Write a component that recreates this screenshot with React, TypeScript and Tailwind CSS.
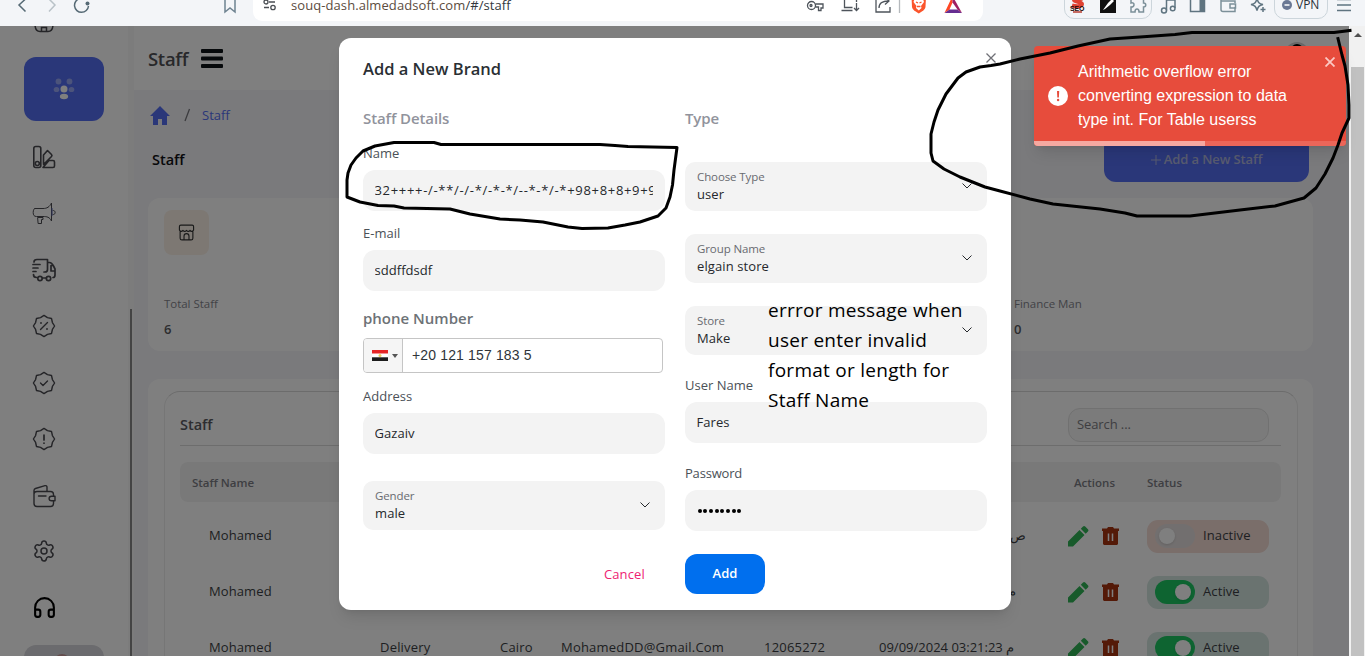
import type { ReactNode } from "react";
import { Settings, Headphones } from "lucide-react";

const star = Array.from({ length: 16 }, (_, i) => {
  const r = i % 2 === 0 ? 10.6 : 9.1;
  const a = (i * Math.PI) / 8;
  return `${(12 + r * Math.sin(a)).toFixed(2)},${(12 - r * Math.cos(a)).toFixed(2)}`;
}).join(" ");

function Ico({ children, size = 24, w = 1.4, className = "" }: { children: ReactNode; size?: number; w?: number; className?: string }) {
  return (
    <svg width={size} height={size} viewBox="0 0 24 24" fill="none" stroke="currentColor" strokeWidth={w} strokeLinecap="round" strokeLinejoin="round" className={`shrink-0 ${className}`}>
      {children}
    </svg>
  );
}

function BrowserBar() {
  return (
    <div className="relative h-[26px] shrink-0 bg-[#f3f5f8] text-[#5f7079]">
      <svg width="240" height="26" className="absolute left-0 top-0" fill="none" strokeWidth="1.5">
        <path d="M25.5 -1L19 5l6.500 6.500" stroke="#566a75" />
        <path d="M49 -1l6 6-6 6.500" stroke="#b9c2c8" />
        <path d="M80 -1.500A7 7 0 1 0 88.500 6" stroke="#566a75" />
        <circle cx="87.500" cy="3.500" r="2" fill="#566a75" />
        <path d="M225 -2V12l5-4 5 4V-2" stroke="#6e8290" />
      </svg>
      <div className="absolute -top-4 left-[253px] flex h-[37px] w-[730px] items-center rounded-[9px] bg-white">
        <svg width="16" height="14" className="absolute left-[9px] top-[13px]" fill="none" stroke="#4b4f54" strokeWidth="1.300">
          <circle cx="4" cy="5" r="2" /><path d="M7 5h6M2 10.500h5" /><circle cx="11" cy="10.500" r="2.200" />
        </svg>
        <div className="pl-[38px] pt-[5px] font-['Open_Sans',sans-serif] text-[13px] leading-[14px] tracking-[0.08px] text-[#33383d]">
          <span className="text-[#5c4c40]">souq-dash.almedadsoft.com</span>/#/staff
        </div>
        <svg width="200" height="37" viewBox="800 -16 200 37" className="absolute left-[547px] top-0" fill="none" stroke="#4e545b" strokeWidth="1.300">
          <circle cx="811.500" cy="5.500" r="4" /><circle cx="811" cy="5.500" r="1" /><path d="M815.500 4h7.500v4h-2v2.500h-2.500V7h-3" />
          <path d="M844.500 -1v8.500h8M856.500 -1v3M841.500 10.500h11M856.500 3v7.500m-2.500-2.500l2.500 2.500 2.500-2.500" />
          <path d="M876 0v12h14V7M879 8c0-5 4-7 9-7m-3-4l4 4-4 3.500" />
          <path d="M899.500 -2V13" stroke="#b5b9bd" />
          <path d="M911.500 -3h14.500l-.5 10c-.5 3-3.500 4.500-6.700 6.500-3.200-2-6.300-3.500-6.800-6.500z" fill="#fb542b" stroke="none" />
          <path d="M914.500 -1l4.300 1 4.200-1 1 3-3 4 .5 2-2.700 2.500L916 8l.5-2-3-4z" fill="#fff" stroke="none" />
          <path d="M916 2l2 1M921.500 2l-2 1M917 6.500h3.500" stroke="#fb542b" />
          <path d="M952.500 -4L944.500 13l5-3.500 3-7z" fill="#ff4724" stroke="none" />
          <path d="M944.500 13h17.500l-4.500-3.500h-8z" fill="#662d91" stroke="none" />
          <path d="M952.500 -4L962 13l-4.500-3.500-5-7z" fill="#9e1f63" stroke="none" />
        </svg>
      </div>
      <div className="absolute -top-3 left-[1064px] h-[31px] w-[88px] rounded-[10px] border border-[#ccd5db]" />
      <div className="absolute -top-3 left-[1274px] h-[31px] w-[54px] rounded-[10px] border border-[#ccd5db]" />
      <svg width="305" height="26" viewBox="1060 0 305 26" className="absolute left-[1060px] top-0" fill="none" stroke="#5f7480" strokeWidth="1.500">
        <path d="M1083 -1c-3-1-9-1-9 1s8 1.500 8 4-5 3-10 1.500" stroke="#df4232" strokeWidth="4" />
        <path d="M1073 12h9" stroke="#b83c30" strokeWidth="1.500" />
        <rect x="1100" y="-3" width="16" height="16" fill="#111" stroke="none" />
        <path d="M1103 10l5-7 4-4 2 2-4 4-5 4z" fill="#fff" stroke="none" />
        <path d="M1131 -1v4c4-1 4 4 0 4v5h4c0-4 4-4 4 0h4.500V7c3 0 3-4 0-4V-1" stroke="#7c9099" />
        <circle cx="1164" cy="10.500" r="2.500" /><path d="M1166.500 10.500V0h8.500v8" /><circle cx="1172.700" cy="8.500" r="2.300" />
        <path d="M1190.500 -1v12.500h14V-1" /><rect x="1199.500" y="-1" width="5.500" height="13" fill="#5f7480" stroke="none" />
        <path d="M1221 0v9.500c0 1 1 2 2 2h12V7M1221 1h14v2M1235.500 4h-5.500v4h5.500z" stroke="#7c9099" />
        <path d="M1251 4.500c4-.5 5-2 6-6 1 4 2 5.500 6 6-4 1-5 2-6 6-1-4-2-5-6-6zM1263 7v5M1260.500 9.500h5" />
        <circle cx="1287" cy="5" r="5" fill="#6a7894" stroke="none" /><path d="M1284.500 5h5" stroke="#fff" />
        <path d="M1337 -.5h14M1337 5h14M1337 10.500h14" />
      </svg>
      <span className="absolute left-[1070px] top-[3px] font-['Liberation_Sans',sans-serif] text-[7px] font-bold leading-[12px] tracking-[-0.2px] text-[#1c0c0a]">SEO</span>
      <span className="absolute left-[1296px] top-0 font-['Open_Sans',sans-serif] text-[12px] leading-[10px] text-[#2b3238]">VPN</span>
    </div>
  );
}

function Nav({ children }: { children: ReactNode }) {
  return <div className="flex h-[56.5px] shrink-0 items-center pl-8 text-[#4a4a50]">{children}</div>;
}

function Sidebar() {
  return (
    <aside className="flex w-[128px] shrink-0 flex-col overflow-hidden bg-white">
      <div className="h-[31px] shrink-0 pl-[34px] text-[#4a4a50]">
        <svg width="20" height="8" fill="none" stroke="currentColor" strokeWidth="1.500"><path d="M1 -2c0 5 2 7.500 5 7.500h8c3 0 5-2.500 5-7.500M7.500 5V1.500h5V5" /></svg>
      </div>
      <div className="ml-6 flex h-16 w-20 shrink-0 items-center justify-center rounded-xl bg-[#556ef2]">
        <svg width="22" height="22" viewBox="0 0 22 22" fill="#fff">
          <g opacity=".4"><circle cx="5.500" cy="3.500" r="2.900" /><circle cx="16.500" cy="3.500" r="2.900" /><ellipse cx="3.500" cy="11.500" rx="2.800" ry="2.600" /><ellipse cx="18.500" cy="11.500" rx="2.800" ry="2.600" /></g>
          <circle cx="11" cy="11" r="3.500" /><ellipse cx="11" cy="18.500" rx="4.100" ry="2.800" />
        </svg>
      </div>
      <div className="h-[7.50px] shrink-0" />
      <Nav><Ico w={1.600}><rect x="1.800" y="1.500" width="7" height="21" rx="2" /><circle cx="5.300" cy="18.500" r="2" /><path d="M11.500 18.500V10l4-4.500 4 4c.7.700.7 1.200 0 2l-8 8M17 15.500h4c1 0 1.500.5 1.500 1.500v4c0 1-.5 1.500-1.500 1.500H11z" /></Ico></Nav>
      <Nav><Ico w={1} className="-mt-[3px]"><path d="M3 8.500h8c4 0 6.500-1.500 8.500-5.500v18c-2-4-4.500-4.500-8.500-4.500H4.500C2 16.500 1.200 15 1.200 12.500S2 8.500 3 8.500zM6 17.500h5v2H9.500v4H6.500z" /><path d="M21 10.500c3-.5 3 4.500 0 4" /><path d="M20 8.500v7" stroke="#5560ae" /></Ico></Nav>
      <Nav><Ico w={1.700}><path d="M2 4c0-1.500 1-2.500 3-2.500h10.500v10c0 1.500-1 2.500-2.500 2.500h-1M1 6.500h7M1 10h5M1 13.500h3M15.500 4.500h2c2 0 3 1.500 4 3.500l1.500 3v6c0 1.500-.5 2.500-2 2.500M1.500 16.500c0 1.500.5 3 3 3h.5M10.500 20h4M20.500 7.500h-1.500v5.500h4" /><circle cx="8" cy="20.500" r="2.200" /><circle cx="16.500" cy="20.500" r="2.200" /></Ico></Nav>
      <Nav><Ico><polygon points={star} /><path d="M8.500 15.500l7-7" /><path d="M9 9v.1M15 15v.1" strokeWidth="1.800" /></Ico></Nav>
      <Nav><Ico><polygon points={star} /><path d="M8.500 12l2.500 2.500 4.500-4.500" /></Ico></Nav>
      <Nav><Ico><polygon points={star} /><path d="M12 8v5M12 16v.2" strokeWidth="1.700" /></Ico></Nav>
      <Nav><Ico><path d="M2 10v9.500c0 2 1 3 3 3h13.500c2 0 3-1 3-3V17M2 10c0-1.500 1-2.500 3-2.500h13.500c2 0 3 1 3 3V12M2 10V6.500c0-1 .5-1.700 1.500-2L13 1.700c1-.3 2 .3 2 1.300v4.500M6.500 12h7.500" /><path d="M19.500 12.200H23v4.600h-3.500c-3.200 0-3.200-4.600 0-4.600z" /></Ico></Nav>
      <Nav><Settings size={24} strokeWidth={1.500} className="-mt-[2px]" /></Nav>
      <Nav><Headphones size={25} strokeWidth={2} className="-mt-[2px] text-black" /></Nav>
      <div className="ml-6 mt-[8px] flex h-16 w-20 shrink-0 justify-center rounded-xl bg-[#d7d7dc] pt-[9px] pr-1"><div className="h-10 w-4 rounded-full bg-[#c69a9a]" /></div>
    </aside>
  );
}

const cols = "grid grid-cols-[172px_120px_61px_203px_115px_189px_79px_122px]";

function StatusChip({ on }: { on: boolean }) {
  return (
    <div className={`flex h-[33px] w-[122px] items-center rounded-[11px] pl-2 ${on ? "bg-[#d5e6e1]" : "bg-[#f4dcd4]"}`}>
      <div className={`flex h-6 w-10 items-center rounded-full px-1 ${on ? "justify-end bg-[#1cc863]" : "justify-start bg-[#e4dfdf]"}`}>
        <div className="h-4 w-4 rounded-full bg-white shadow" />
      </div>
      <span className="ml-2 text-[13px] tracking-[0.1px] text-[#3c3f44]">{on ? "Active" : "Inactive"}</span>
    </div>
  );
}

function Row({ cells, date, on }: { cells: string[]; date: ReactNode; on: boolean }) {
  return (
    <div className={`${cols} h-14 shrink-0 items-center text-[13px] tracking-[0.2px] text-[#3c3f44]`}>
      <span className="pl-[1px] tracking-[0.1px]">Mohamed</span>
      {cells.map((c, i) => <span key={i} className="whitespace-nowrap">{c}</span>)}
      <span className="whitespace-nowrap">{date}</span>
      <span className="flex items-center gap-[13px]">
        <svg width="21" height="21" viewBox="0 0 21 21" fill="#2f9e4f"><path d="M0 20.500v-5L11.500 4l5 5L5 20.500zM12.800 2.800L15 .6c.7-.7 1.500-.7 2.200 0l2.700 2.700c.7.700.7 1.500 0 2.200l-2.200 2.200z" fill="#31b457" /></svg>
        <svg width="17" height="18" viewBox="0 0 17 18"><path d="M0 1.500h5L6 0h5l1 1.500h5V4h-1v13l-1 1H2l-1-1V4H0z" fill="#a83410" /><path d="M6.500 6.500v7.500M10.500 6.500v7.500" stroke="#fff" strokeWidth="1.500" /></svg>
      </span>
      <StatusChip on={on} />
    </div>
  );
}

function MainPage() {
  return (
    <main className="flex min-w-0 flex-1 flex-col overflow-hidden bg-[#f4f4f9]">
      <header className="relative flex h-16 shrink-0 items-center bg-white pl-[14px]">
        <span className="pt-[2px] text-[18.500px] font-semibold leading-7 tracking-[-0.3px] text-[#505055]">Staff</span>
        <svg width="22" height="20" className="ml-[13px] mt-[1px]" fill="#0d1216"><rect y="0" width="22" height="4" rx="1" /><rect y="7.500" width="22" height="4" rx="1" /><rect y="15" width="22" height="4" rx="1" /></svg>
        <div className="absolute right-[40px] top-4 flex h-8 w-6 justify-center rounded-full bg-[#d0d0d0] pt-[2px]"><div className="h-6 w-3 rounded-full bg-black" /></div>
      </header>
      <div className="flex h-[50px] shrink-0 items-center pl-4 text-[13px] text-[#556ef2]">
        <svg width="20" height="19" fill="#556ef2"><path d="M10 0l10 10h-3v9h-5v-6H8v6H3v-9H0z" /></svg>
        <svg width="7" height="14" className="ml-[14px]" stroke="#77777c" strokeWidth="1.300"><path d="M1 13L5.500 1" /></svg>
        <span className="ml-[11px] pt-[2px]">Staff</span>
      </div>
      <div className="flex h-[58px] shrink-0 items-start justify-between pl-[18px] pr-10">
        <span className="mt-[8px] text-[14.500px] font-semibold leading-6 tracking-[0px] text-[#101014]">Staff</span>
        <div className="-mt-1 flex h-[46px] w-[205px] items-center justify-center gap-[3px] rounded-xl bg-[#556ef2] pt-[2px] text-[13px] font-semibold tracking-[-0.1px] text-[#b0b7df]">
          <svg width="10" height="10" stroke="currentColor"><path d="M0 5h10M5 0v10" /></svg>Add a New Staff
        </div>
      </div>
      <section className="ml-[14px] flex h-[153px] w-[1165px] shrink-0 rounded-xl bg-white p-4 pt-3">
        <div className="flex w-[850px] flex-col">
          <div className="flex h-[45px] w-[45px] shrink-0 items-center justify-center rounded-lg bg-[#faf1e6] text-[#333]">
            <Ico size={17} w={1.600}><path d="M2 3.500C2 2 3 1.500 4 1.500h16c1.500 0 2 1 2 2v5c-1 2.500-4 2.500-5 .5-1.500 2-3.500 2-5 0-1.500 2-3.500 2-5 0-1.500 2-4 2-5-.5zM3 11v9c0 1.500 1 2.500 2.500 2.500h13c1.500 0 2.500-1 2.500-2.500v-9M8.500 22v-5c0-4.500 7-4.500 7 0v5" /></Ico>
          </div>
          <span className="mt-[40px] text-[11.500px] leading-[18px] tracking-[-0.03px] text-[#85868e]">Total Staff</span>
          <span className="mt-[6px] text-[13px] font-semibold leading-5 text-[#5a5b61]">6</span>
        </div>
        <div className="flex flex-col pt-[85px]">
          <span className="text-[11.500px] leading-[18px] tracking-[-0.03px] text-[#85868e]">Finance Man</span>
          <span className="mt-[6px] text-[13px] font-semibold leading-5 text-[#5a5b61]">0</span>
        </div>
      </section>
      <section className="ml-[14px] mt-7 w-[1165px] flex-1 shrink-0 rounded-t-xl bg-white px-4 pt-3">
        <div className="h-[300px] w-[1134px] rounded-2xl border border-[#ececec] border-t-[#d8d8d8] px-[15px]">
          <div className="flex h-[54px] w-[1101px] items-center justify-between border-b border-[#dadada] pr-3">
            <span className="pt-3 text-[14.500px] font-semibold tracking-[0px] text-[#5a5b61]">Staff</span>
            <div className="mt-[12px] flex h-[34px] w-[201px] items-center rounded-xl border border-[#e2e2e2] bg-[#f6f6f6] pl-2 text-[13px] tracking-[-0.1px] text-[#7c7d83]">Search ...</div>
          </div>
          <div className="mt-4 flex h-10 w-[1101px] items-center rounded-lg bg-[#f3f3f3] pl-3 pt-[2px] text-[11.500px] font-semibold text-[#7c7d84]">
            <span className="w-[882px]">Staff Name</span>
            <span className="w-[73px]">Actions</span>
            <span>Status</span>
          </div>
          <div className="mt-[6px] flex h-[148px] flex-col overflow-hidden pl-[28px]">
            <Row cells={["", "", "", ""]} date={<span className="pl-[131px]">ص</span>} on={false} />
            <Row cells={["", "", "", ""]} date={<span className="pl-[129px]">م</span>} on />
            <Row cells={["Delivery", "Cairo", "MohamedDD@Gmail.Com", "12065272"]} date="09/09/2024 03:21:23 م" on />
          </div>
        </div>
      </section>
    </main>
  );
}

function Label({ children, className = "" }: { children: ReactNode; className?: string }) {
  return <div className={`mb-[2px] flex h-[30px] shrink-0 items-center pt-[2px] text-[13px] tracking-[0.02px] text-[#4b5157] ${className}`}>{children}</div>;
}

function Field({ children }: { children: ReactNode }) {
  return (
    <div className="flex h-[41px] shrink-0 items-center rounded-xl bg-[#f3f3f3] pl-[11.500px] pr-3 text-[13px] tracking-[0.05px] text-[#25282c]">
      <div className="w-full overflow-hidden whitespace-nowrap">{children}</div>
    </div>
  );
}

function Select({ label, value, className }: { label: string; value: string; className: string }) {
  return (
    <div className={`flex h-[49px] shrink-0 items-center justify-between rounded-[10px] bg-[#f3f3f3] pb-[2px] pl-3 pr-[15px] ${className}`}>
      <div>
        <div className="text-[11.500px] leading-[18px] tracking-[-0.1px] text-[#686a70]">{label}</div>
        <div className="text-[13px] leading-[17px] tracking-[0.1px] text-[#25282c]">{value}</div>
      </div>
      <svg width="10" height="6" fill="none" stroke="#25282c"><path d="M.5 .5L5 5 9.500 .5" /></svg>
    </div>
  );
}

function Modal() {
  return (
    <div className="absolute left-[339px] top-[38px] flex h-[572px] w-[672px] flex-col rounded-xl bg-white px-6 shadow-lg">
      <svg width="10" height="10" className="absolute left-[647px] top-[15px]" stroke="#6f7076" strokeWidth="1.300"><path d="M.5 .5l9 9M9.500 .5l-9 9" /></svg>
      <div className="flex h-[60px] shrink-0 items-center pt-[2px] text-[16.500px] font-semibold text-[#2a2f34]">Add a New Brand</div>
      <div className="grid grid-cols-2 gap-5">
        <div className="flex flex-col">
          <div className="flex h-10 items-center text-[15px] font-semibold tracking-[-0.1px] text-[#91939c]">Staff Details</div>
          <Label>Name</Label>
          <Field><span className="tracking-[0.68px]">32++++-/-**/-/-*/-*-*/--*-*/-*+98+8+8+9+98</span></Field>
          <Label className="mt-[7px]">E-mail</Label>
          <Field>sddffdsdf</Field>
          <div className="mb-[6px] mt-[13px] flex h-7 items-center text-[15px] font-semibold text-[#6d7276]">phone Number</div>
          <div className="flex h-[35px] w-[300px] overflow-hidden rounded-[4px] border border-[#c5c5c5]">
            <div className="flex w-[39px] items-center gap-1 border-r border-[#c5c5c5] bg-[#f5f5f5] pl-2">
              <svg width="16" height="11"><rect width="16" height="4" fill="#e62626" /><rect y="3.500" width="16" height="4" fill="#fff" /><rect y="7.300" width="16" height="3.700" fill="#1c1c1c" /><circle cx="8" cy="5.600" r="1.500" fill="#e8cf5e" /></svg>
              <svg width="6" height="4" fill="#555"><path d="M0 0h6L3 4z" /></svg>
            </div>
            <div className="flex items-center pl-[9px] font-['Liberation_Sans',sans-serif] text-[14px] tracking-[0.15px] text-[#30343a]">+20 121 157 183 5</div>
          </div>
          <Label className="mt-2">Address</Label>
          <Field>Gazaiv</Field>
          <Select className="mt-[27px]" label="Gender" value="male" />
        </div>
        <div className="flex flex-col">
          <div className="flex h-10 items-center text-[15px] font-semibold tracking-[-0.1px] text-[#91939c]">Type</div>
          <Select className="mt-6" label="Choose Type" value="user" />
          <Select className="mt-[23px]" label="Group Name" value="elgain store" />
          <Select className="mt-[23px]" label="Store" value="Make" />
          <Label className="mt-[15px]">User Name</Label>
          <Field>Fares</Field>
          <Label className="mt-[15px]"><span className="tracking-[-0.2px]">Password</span></Label>
          <Field>
            <span className="flex gap-[1.700px] pl-[1px]">{Array.from({ length: 8 }, (_, i) => <span key={i} className="h-1 w-1 rounded-full bg-black" />)}</span>
          </Field>
        </div>
      </div>
      <div className="mt-[23px] flex items-center justify-between pr-[222px]">
        <span className="ml-[241px] pt-[1px] text-[13px] tracking-[0.1px] text-[#ee2272]">Cancel</span>
        <div className="flex h-10 w-20 items-center justify-center rounded-xl bg-[#006fee] text-[13px] font-semibold text-white">Add</div>
      </div>
    </div>
  );
}

function Toast() {
  return (
    <div className="absolute left-[1034px] top-[46px] flex h-[100px] w-[312px] items-center overflow-hidden rounded-[4px] bg-[#e74c3c] pl-[14px] shadow-lg">
      <svg width="20" height="20"><circle cx="10" cy="10" r="10" fill="#fff" /><path d="M9 5h2.200l-.3 6.500H9.300z" fill="#e74c3c" /><circle cx="10.100" cy="14" r="1.200" fill="#e74c3c" /></svg>
      <div className="ml-[10px] w-[230px] font-['Liberation_Sans',sans-serif] text-[16px] leading-6 text-white">
        <div>Arithmetic overflow error</div>
        <div>converting expression to data</div>
        <div>type int. For Table userss</div>
      </div>
      <svg width="10" height="10" className="absolute right-[11px] top-[11px]" stroke="#fbc9c4" strokeWidth="1.800"><path d="M.5 .5l9 9M9.500 .5l-9 9" /></svg>
      <div className="absolute bottom-0 left-0 h-[5px] w-full bg-[#ec6659]"><div className="h-full w-[171px] bg-[#f5a9a1]" /></div>
    </div>
  );
}

function Scrollbar() {
  return (
    <div className="flex w-4 shrink-0 flex-col bg-[#f1f1f1] pl-[2px] pr-[1px]">
      <div className="flex h-[41px] justify-center pt-[7px]"><svg width="8" height="5" fill="#505050"><path d="M4 0l4 4H0z" /></svg></div>
      <div className="flex-1 bg-[#c1c1c1]" />
    </div>
  );
}

export default function App() {
  return (
    <div className="relative flex h-[656px] w-[1365px] flex-col overflow-hidden font-['Open_Sans','Noto_Sans',sans-serif]">
      <BrowserBar />
      <div className="flex min-h-0 flex-1">
        <div className="relative flex w-[1349px] overflow-hidden">
          <Sidebar />
          <div className="w-[6px] shrink-0 bg-[#f8f8f8] pl-[2px] pt-[283px]"><div className="h-full w-[2px] bg-[#888]" /></div>
          <MainPage />
          <div className="absolute inset-0 bg-black/50" />
        </div>
        <Scrollbar />
      </div>
      <Modal />
      <Toast />
      <div className="absolute left-[768px] top-[295px] whitespace-nowrap text-[19px] leading-[30px] tracking-[0.27px] text-black">
        <div>errror message when</div>
        <div>user enter invalid</div>
        <div>format or length for</div>
        <div>Staff Name</div>
      </div>
      <svg width="1365" height="656" className="pointer-events-none absolute inset-0" fill="none" stroke="#000" strokeWidth="3" strokeLinejoin="round" strokeLinecap="square">
        <path d="M347 197V180L348 173 351 165 356 158 363 151 375 146 394 142.500H434L441 144.500H600L615 145.500 628 146.500 677 147.500 674 170 672.500 185 670 197 666 208 658 216 640 222 625 225 608 228 582 228.500 568 227 543 222 520 220 500 219 470 214 450 209 404 208 394 206 378 205.500 360 202z" />
        <path d="M1350 30.500L1334 32.500H1192L1175 34.500 1140 37 1110 39 1078 46 1050 53 1020 59 1000 64 991 65.500 980 67 966 72 958 78 946 94 938 110 934 122 931 134V153L933 161 944 169 960 177 985 187 1000 191 1030 199 1053 204 1100 209 1125 213 1137 216H1190L1240 210 1275 206 1304 198 1316 188 1325 174 1333 158 1338 145 1342 133 1349 118V105L1348 85 1345 66 1342 55 1338 38.500" />
      </svg>
    </div>
  );
}
